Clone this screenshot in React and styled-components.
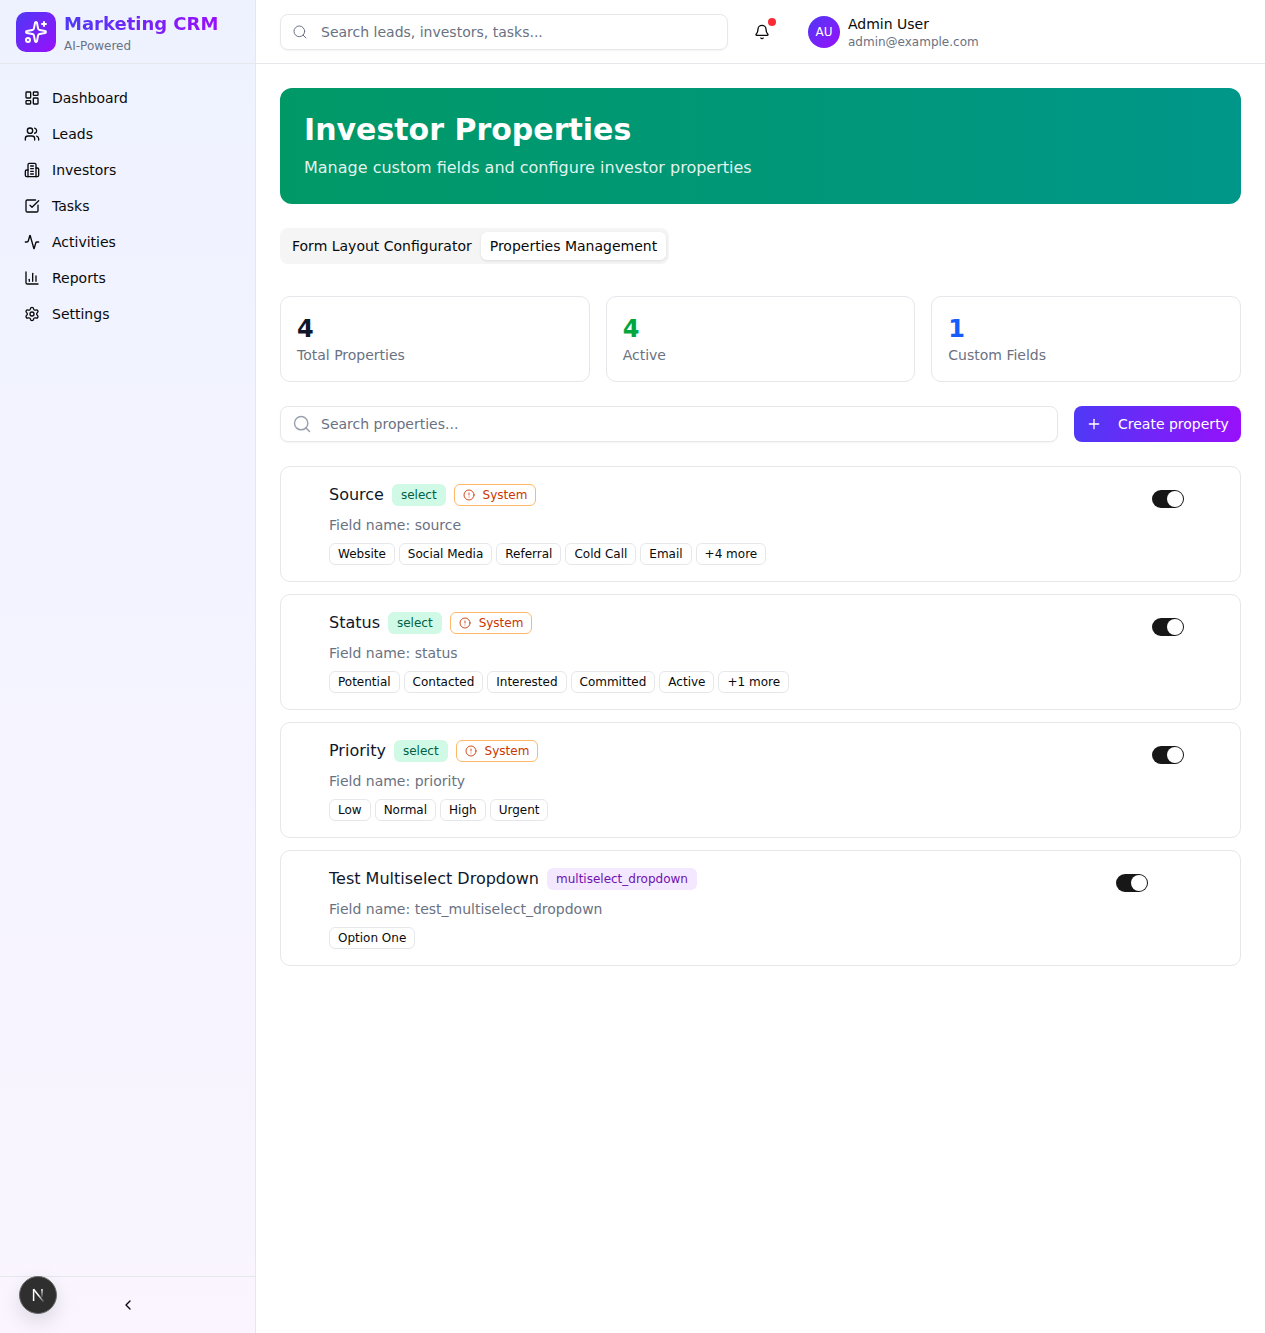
import React from "react";
import styled, { createGlobalStyle } from "styled-components";
import {
  Activity,
  Bell,
  ChartColumn,
  ChevronLeft,
  CircleAlert,
  LayoutDashboard,
  Plus,
  Search,
  Settings,
  Sparkles,
  SquareCheckBig,
  Users,
} from "lucide-react";

const GlobalStyle = createGlobalStyle`
  * { box-sizing: border-box; }
  html, body { margin: 0; padding: 0; }
  body {
    background: #fff;
    color: #0a0a0a;
    font-family: "DejaVu Sans", sans-serif;
  }
`;

const InvestorsIcon = ({ size }) => (
  <svg
    width={size}
    height={size}
    viewBox="0 0 24 24"
    fill="none"
    stroke="currentColor"
    strokeWidth="2"
    strokeLinecap="round"
    strokeLinejoin="round"
  >
    <path d="M6 22V4a2 2 0 0 1 2-2h8a2 2 0 0 1 2 2v18Z" />
    <path d="M6 12H4a2 2 0 0 0-2 2v6a2 2 0 0 0 2 2h2" />
    <path d="M18 9h2a2 2 0 0 1 2 2v9a2 2 0 0 1-2 2h-2" />
    <path d="M10 6h4" />
    <path d="M10 10h4" />
    <path d="M10 14h4" />
    <path d="M10 18h4" />
  </svg>
);

const NextMark = () => (
  <svg width="18" height="18" viewBox="0 0 18 18" fill="none">
    <defs>
      <linearGradient id="nextDiagonal" x1="4" y1="3" x2="14" y2="16" gradientUnits="userSpaceOnUse">
        <stop offset="0.5" stopColor="#fff" />
        <stop offset="1" stopColor="#fff" stopOpacity="0.15" />
      </linearGradient>
      <linearGradient id="nextRight" x1="13" y1="3" x2="13" y2="11" gradientUnits="userSpaceOnUse">
        <stop offset="0" stopColor="#fff" />
        <stop offset="1" stopColor="#fff" stopOpacity="0.15" />
      </linearGradient>
    </defs>
    <path d="M4.6 15V3" stroke="#fff" strokeWidth="1.5" />
    <path d="M4.6 3.2L14.6 15.8" stroke="url(#nextDiagonal)" strokeWidth="1.5" />
    <path d="M13 3v8" stroke="url(#nextRight)" strokeWidth="1.5" />
  </svg>
);

const navItems = [
  { label: "Dashboard", icon: LayoutDashboard },
  { label: "Leads", icon: Users },
  { label: "Investors", icon: InvestorsIcon },
  { label: "Tasks", icon: SquareCheckBig },
  { label: "Activities", icon: Activity },
  { label: "Reports", icon: ChartColumn },
  { label: "Settings", icon: Settings },
];

const stats = [
  { value: 4, label: "Total Properties", color: "#0f172b" },
  { value: 4, label: "Active", color: "#00a63e" },
  { value: 1, label: "Custom Fields", color: "#155dfc" },
];

const properties = [
  {
    name: "Source",
    type: "select",
    system: true,
    field: "source",
    options: ["Website", "Social Media", "Referral", "Cold Call", "Email", "+4 more"],
  },
  {
    name: "Status",
    type: "select",
    system: true,
    field: "status",
    options: ["Potential", "Contacted", "Interested", "Committed", "Active", "+1 more"],
  },
  {
    name: "Priority",
    type: "select",
    system: true,
    field: "priority",
    options: ["Low", "Normal", "High", "Urgent"],
  },
  {
    name: "Test Multiselect Dropdown",
    type: "multiselect_dropdown",
    field: "test_multiselect_dropdown",
    options: ["Option One"],
  },
];

const App = () => {
  return (
    <Page>
      <GlobalStyle />
      <SideBar>
        <Brand>
          <BrandIcon>
            <Sparkles size={24} strokeWidth={2} />
          </BrandIcon>
          <BrandText>
            <BrandName>Marketing CRM</BrandName>
            <BrandSub>AI-Powered</BrandSub>
          </BrandText>
        </Brand>
        <Nav>
          {navItems.map(({ label, icon: Icon }) => (
            <NavItem key={label}>
              <Icon size={16} strokeWidth={2} />
              {label}
            </NavItem>
          ))}
        </Nav>
        <SideFooter>
          <ChevronLeft size={16} strokeWidth={2} />
        </SideFooter>
      </SideBar>

      <Content>
        <TopBar>
          <TopSearch>
            <Search size={16} strokeWidth={1.5} color="#6a7282" />
            <span>Search leads, investors, tasks...</span>
          </TopSearch>
          <BellButton>
            <Bell size={16} strokeWidth={2} />
            <BellDot />
          </BellButton>
          <Avatar>AU</Avatar>
          <UserInfo>
            <UserName>Admin User</UserName>
            <UserMail>admin@example.com</UserMail>
          </UserInfo>
        </TopBar>

        <Main>
          <Banner>
            <BannerTitle>Investor Properties</BannerTitle>
            <BannerText>Manage custom fields and configure investor properties</BannerText>
          </Banner>

          <Tabs>
            <Tab>Form Layout Configurator</Tab>
            <Tab active>Properties Management</Tab>
          </Tabs>

          <StatGrid>
            {stats.map(stat => (
              <StatCard key={stat.label}>
                <StatValue color={stat.color}>{stat.value}</StatValue>
                <StatLabel>{stat.label}</StatLabel>
              </StatCard>
            ))}
          </StatGrid>

          <ToolRow>
            <PropertySearch>
              <Search size={20} strokeWidth={1.75} color="#99a1af" />
              <span>Search properties...</span>
            </PropertySearch>
            <CreateButton>
              <Plus size={16} strokeWidth={2} />
              Create property
            </CreateButton>
          </ToolRow>

          <PropertyList>
            {properties.map(property => (
              <PropertyCard key={property.field}>
                <PropertyBody>
                  <TitleRow>
                    <PropertyName>{property.name}</PropertyName>
                    <TypeBadge multi={property.type !== "select"}>{property.type}</TypeBadge>
                    {property.system && (
                      <SystemBadge>
                        <CircleAlert size={12} strokeWidth={1.75} />
                        System
                      </SystemBadge>
                    )}
                  </TitleRow>
                  <FieldName>Field name: {property.field}</FieldName>
                  <OptionRow>
                    {property.options.map(option => (
                      <OptionChip key={option}>{option}</OptionChip>
                    ))}
                  </OptionRow>
                </PropertyBody>
                <Toggle system={property.system}>
                  <ToggleKnob />
                </Toggle>
              </PropertyCard>
            ))}
          </PropertyList>
        </Main>
      </Content>

      <DevBadge>
        <NextMark />
      </DevBadge>
    </Page>
  );
};

const Page = styled.div`
  display: flex;
  min-height: 1333px;
`;

const SideBar = styled.aside`
  width: 256px;
  flex-shrink: 0;
  display: flex;
  flex-direction: column;
  border-right: 1px solid #e5e7eb;
  background: linear-gradient(180deg, #eef2ff 0%, #faf5ff 100%);
`;

const Brand = styled.div`
  height: 64px;
  display: flex;
  align-items: center;
  gap: 8px;
  padding: 0 16px;
  border-bottom: 1px solid #e5e7eb;
`;

const BrandIcon = styled.div`
  width: 40px;
  height: 40px;
  display: flex;
  align-items: center;
  justify-content: center;
  border-radius: 10px;
  color: #fff;
  background: linear-gradient(135deg, #4f39f6, #9810fa);
`;

const BrandText = styled.div`
  padding-top: 2px;
`;

const BrandName = styled.div`
  font-size: 18px;
  line-height: 24px;
  font-weight: 700;
  background: linear-gradient(90deg, #4f39f6, #9810fa);
  -webkit-background-clip: text;
  background-clip: text;
  color: transparent;
`;

const BrandSub = styled.div`
  margin-top: 2px;
  font-size: 12px;
  line-height: 16px;
  color: #6a7282;
`;

const Nav = styled.nav`
  flex: 1;
  display: flex;
  flex-direction: column;
  padding: 16px 8px;
`;

const NavItem = styled.div`
  height: 36px;
  display: flex;
  align-items: center;
  gap: 12px;
  padding: 0 16px;
  font-size: 14px;
  color: #0a0a0a;
`;

const SideFooter = styled.div`
  height: 57px;
  display: flex;
  align-items: center;
  justify-content: center;
  border-top: 1px solid #e5e7eb;
`;

const Content = styled.div`
  flex: 1;
  min-width: 0;
`;

const TopBar = styled.header`
  height: 64px;
  display: flex;
  align-items: center;
  padding: 0 24px;
  border-bottom: 1px solid #e5e7eb;
`;

const TopSearch = styled.div`
  width: 448px;
  height: 36px;
  display: flex;
  align-items: center;
  gap: 13px;
  padding: 0 11px;
  border: 1px solid #e5e7eb;
  border-radius: 8px;
  box-shadow: 0 1px 2px rgba(0, 0, 0, 0.05);
  font-size: 14px;
  color: #6a7282;
`;

const BellButton = styled.div`
  position: relative;
  width: 36px;
  height: 36px;
  margin-left: 16px;
  margin-right: 28px;
  display: flex;
  align-items: center;
  justify-content: center;
`;

const BellDot = styled.span`
  position: absolute;
  top: 4px;
  right: 4px;
  width: 8px;
  height: 8px;
  border-radius: 50%;
  background: #fb2c36;
`;

const Avatar = styled.div`
  width: 32px;
  height: 32px;
  display: flex;
  align-items: center;
  justify-content: center;
  border-radius: 50%;
  color: #fff;
  font-size: 12px;
  background: linear-gradient(135deg, #4f39f6, #9810fa);
`;

const UserInfo = styled.div`
  margin-left: 8px;
  padding-top: 2px;
`;

const UserName = styled.div`
  font-size: 14px;
  line-height: 18px;
  color: #0a0a0a;
`;

const UserMail = styled.div`
  margin-top: 1px;
  font-size: 12px;
  line-height: 16px;
  color: #6a7282;
`;

const Main = styled.main`
  padding: 24px;
`;

const Banner = styled.section`
  height: 116px;
  padding: 24px;
  border-radius: 12px;
  color: #fff;
  background: linear-gradient(90deg, #009966, #009689);
`;

const BannerTitle = styled.h1`
  margin: 0 0 8px;
  font-size: 30px;
  line-height: 36px;
  font-weight: 700;
`;

const BannerText = styled.p`
  margin: 0;
  font-size: 16px;
  line-height: 24px;
  color: rgba(255, 255, 255, 0.9);
`;

const Tabs = styled.div`
  display: inline-flex;
  height: 36px;
  margin-top: 24px;
  padding: 4px 3px;
  border-radius: 8px;
  background: #f5f5f5;
`;

const Tab = styled.div`
  display: flex;
  align-items: center;
  padding: 0 9px;
  border-radius: 6px;
  font-size: 14px;
  color: #0a0a0a;
  background: ${props => (props.active ? "#fff" : "transparent")};
  box-shadow: ${props => (props.active ? "0 1px 3px rgba(0, 0, 0, 0.1)" : "none")};
`;

const StatGrid = styled.div`
  display: grid;
  grid-template-columns: repeat(3, 1fr);
  gap: 16px;
  margin-top: 32px;
`;

const StatCard = styled.div`
  height: 86px;
  padding: 16px;
  border: 1px solid #e5e7eb;
  border-radius: 10px;
`;

const StatValue = styled.div`
  font-size: 24px;
  line-height: 32px;
  font-weight: 700;
  color: ${props => props.color};
`;

const StatLabel = styled.div`
  font-size: 14px;
  line-height: 20px;
  color: #6a7282;
`;

const ToolRow = styled.div`
  display: flex;
  gap: 16px;
  margin-top: 24px;
`;

const PropertySearch = styled.div`
  flex: 1;
  height: 36px;
  display: flex;
  align-items: center;
  gap: 9px;
  padding: 0 11px;
  border: 1px solid #e5e7eb;
  border-radius: 8px;
  box-shadow: 0 1px 2px rgba(0, 0, 0, 0.05);
  font-size: 14px;
  color: #6a7282;
`;

const CreateButton = styled.button`
  width: 167px;
  height: 36px;
  display: flex;
  align-items: center;
  gap: 16px;
  padding: 0 12px;
  border: none;
  border-radius: 8px;
  color: #fff;
  font-family: inherit;
  font-size: 14px;
  white-space: nowrap;
  background: linear-gradient(90deg, #4f39f6, #9810fa);
`;

const PropertyList = styled.div`
  display: flex;
  flex-direction: column;
  gap: 12px;
  margin-top: 24px;
`;

const PropertyCard = styled.article`
  height: 116px;
  display: flex;
  align-items: flex-start;
  justify-content: space-between;
  padding: 16px 0 0 48px;
  border: 1px solid #e5e7eb;
  border-radius: 10px;
`;

const PropertyBody = styled.div`
  min-width: 0;
`;

const TitleRow = styled.div`
  height: 24px;
  display: flex;
  align-items: center;
  gap: 8px;
`;

const PropertyName = styled.span`
  margin-bottom: 2px;
  font-size: 16px;
  color: #0f172b;
`;

const TypeBadge = styled.span`
  height: 22px;
  display: flex;
  align-items: center;
  padding: 0 9px;
  border-radius: 6px;
  font-size: 12px;
  color: ${props => (props.multi ? "#6e11b0" : "#006045")};
  background: ${props => (props.multi ? "#f3e8ff" : "#d0fae5")};
`;

const SystemBadge = styled.span`
  height: 22px;
  display: flex;
  align-items: center;
  gap: 8px;
  padding: 0 8px;
  border: 1px solid #ffb86a;
  border-radius: 6px;
  font-size: 12px;
  color: #ca3500;
`;

const FieldName = styled.div`
  margin-top: 8px;
  font-size: 14px;
  line-height: 20px;
  color: #6a7282;
`;

const OptionRow = styled.div`
  display: flex;
  gap: 4px;
  margin-top: 8px;
`;

const OptionChip = styled.span`
  height: 22px;
  display: flex;
  align-items: center;
  padding: 0 8px;
  border: 1px solid #e5e7eb;
  border-radius: 6px;
  font-size: 12px;
  color: #0a0a0a;
`;

const Toggle = styled.div`
  width: 32px;
  height: 18px;
  flex-shrink: 0;
  display: flex;
  align-items: center;
  justify-content: flex-end;
  margin-top: 7px;
  margin-right: ${props => (props.system ? "56px" : "92px")};
  border-radius: 9px;
  background: #171717;
`;

const ToggleKnob = styled.span`
  width: 16px;
  height: 16px;
  margin-right: 1px;
  border-radius: 50%;
  background: #fff;
`;

const DevBadge = styled.div`
  position: fixed;
  left: 19px;
  top: 1276px;
  width: 38px;
  height: 38px;
  display: flex;
  align-items: center;
  justify-content: center;
  border-radius: 50%;
  border: 1px solid #6b6b6b;
  background: #2f2f2f;
  box-shadow: 0 8px 20px rgba(0, 0, 0, 0.12);
`;

export default App;
